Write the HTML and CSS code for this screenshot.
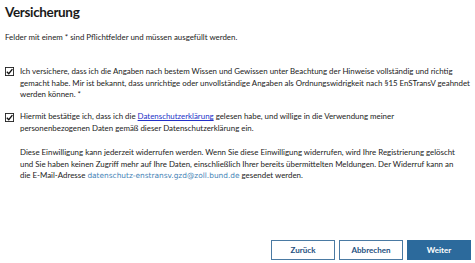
FILE: index.html
```html
<!DOCTYPE html>
<html lang="de">
<head>
<meta charset="utf-8">
<link rel="stylesheet" href="styles.css">
</head>
<body>
<div class="page">
  <h1 class="title">Versicherung</h1>
  <p class="hint">Felder mit einem * sind Pflichtfelder und müssen ausgefüllt werden.</p>

  <div class="check-row first">
    <span class="box"><svg viewBox="0 0 10 10" width="9" height="9"><rect x="0.5" y="0.5" width="9" height="9" fill="#fff" stroke="#222" stroke-width="1"/><path d="M2 5.2 L4.2 7.4 L8.2 2.4" fill="none" stroke="#111" stroke-width="1.5"/></svg></span>
    <div class="check-text">Ich versichere, dass ich die Angaben nach bestem Wissen und Gewissen unter Beachtung der Hinweise vollständig und richtig gemacht habe. Mir ist bekannt, dass unrichtige oder unvollständige Angaben als Ordnungswidrigkeit nach §15 EnSTransV geahndet werden können. *</div>
  </div>

  <div class="check-row second">
    <span class="box"><svg viewBox="0 0 10 10" width="9" height="9"><rect x="0.5" y="0.5" width="9" height="9" fill="#fff" stroke="#222" stroke-width="1"/><path d="M2 5.2 L4.2 7.4 L8.2 2.4" fill="none" stroke="#111" stroke-width="1.5"/></svg></span>
    <div class="check-text narrow">
      <p class="para">Hiermit bestätige ich, dass ich die <a class="link" href="#">Datenschutzerklärung</a> gelesen habe, und willige in die Verwendung meiner personenbezogenen Daten gemäß dieser Datenschutzerklärung ein.</p>
      <p class="para note">Diese Einwilligung kann jederzeit widerrufen werden. Wenn Sie diese Einwilligung widerrufen, wird Ihre Registrierung gelöscht und Sie haben keinen Zugriff mehr auf Ihre Daten, einschließlich Ihrer bereits übermittelten Meldungen. Der Widerruf kann an die E-Mail-Adresse <span class="mail">datenschutz-enstransv.gzd@zoll.bund.de</span> gesendet werden.</p>
    </div>
  </div>

  <div class="actions">
    <button class="btn">Zurück</button>
    <button class="btn">Abbrechen</button>
    <button class="btn primary">Weiter</button>
  </div>
</div>
</body>
</html>
```
FILE: styles.css
```css
html, body {
  margin: 0;
  padding: 0;
  background: #fff;
}
.page {
  width: 475px;
  height: 263px;
  box-sizing: border-box;
  padding: 2px 4px 0 5px;
  font-family: Lato, "Open Sans", sans-serif;
  color: #222;
  font-size: 7.9px;
  line-height: 11.8px;
  display: flex;
  flex-direction: column;
}
.title {
  margin: 0;
  font-size: 13.5px;
  letter-spacing: -0.35px;
  line-height: 20px;
  font-weight: 700;
  color: #1a1a1a;
}
.hint {
  margin: 10px 0 0 0;
}
.check-row {
  display: flex;
  gap: 6px;
  align-items: flex-start;
}
.first { margin-top: 22px; }
.second { margin-top: 10px; }
.box {
  flex: 0 0 9px;
  height: 9px;
  margin-top: 1.5px;
  display: block;
}
.box svg { display: block; }
.check-text {
  flex: 1;
}
.narrow {
  flex: 0 0 auto;
  width: 439px;
}
.para { margin: 0; }
.note { margin-top: 12px; }
.link {
  color: #2230c8;
  text-decoration: underline;
}
.mail {
  font-family: "DejaVu Sans", Verdana, sans-serif;
  font-size: 7.4px;
  line-height: 1;
  color: #4583b6;
}
.actions {
  margin-top: auto;
  margin-bottom: 3px;
  display: flex;
  justify-content: flex-end;
  gap: 4px;
}
.btn {
  width: 64px;
  height: 20px;
  box-sizing: border-box;
  border: 1px solid #4a7aa3;
  background: #fff;
  color: #1d4f7e;
  font-family: Lato, "Open Sans", sans-serif;
  font-size: 8px;
  font-weight: 700;
  padding: 0;
}
.primary {
  background: #2c6a9c;
  border-color: #2c6a9c;
  color: #fff;
}
```
